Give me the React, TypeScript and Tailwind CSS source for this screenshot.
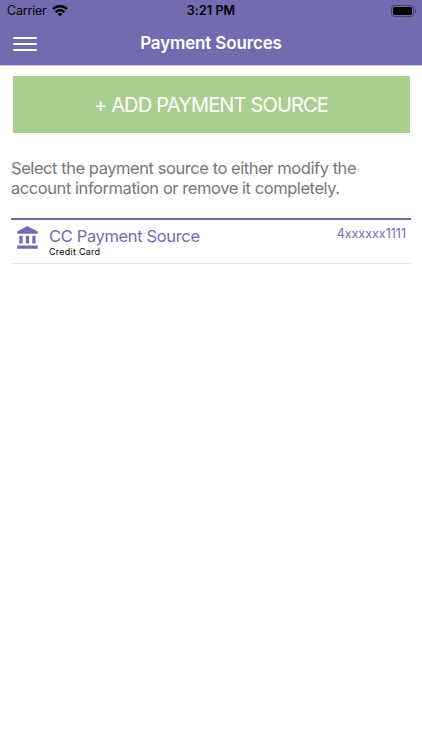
const sources = [{ name: "CC Payment Source", type: "Credit Card", number: "4xxxxxx1111" }];

function BankIcon() {
  return (
    <svg className="mt-[5px] ml-1 shrink-0" width="26" height="26" viewBox="0 0 24 24" fill="currentColor">
      <path d="M4 10v7h3v-7H4zm6 0v7h3v-7h-3zM2 22h19v-3H2v3zm14-12v7h3v-7h-3zm-4.500-9L2 6v2h19V6l-9.500-5z" />
    </svg>
  );
}

function StatusBar() {
  return (
    <div className="grid h-[22px] grid-cols-3 items-center text-black">
      <div className="flex items-center gap-[5px] pl-[7px]">
        <span className="text-[12.5px] tracking-[-0.2px]">Carrier</span>
        <svg width="16" height="12" viewBox="0 0 16 12" fill="currentColor">
          <path d="M8 11.600 5.600 9.100a3.400 3.400 0 0 1 4.800 0Z" />
          <path d="M2.800 6.200a7.400 7.400 0 0 1 10.400 0l-1.700 1.800a5 5 0 0 0-7 0Z" />
          <path d="M.100 3.300a11.300 11.300 0 0 1 15.800 0l-1.700 1.800a9 9 0 0 0-12.400 0Z" />
        </svg>
      </div>
      <div className="text-center text-[12.5px] font-semibold tracking-[0.1px]">3:21 PM</div>
      <div className="flex justify-end pr-[5px]">
        <svg width="26" height="12" viewBox="0 0 26 12">
          <rect x="0.5" y="0.5" width="22" height="11" rx="3" fill="none" stroke="#000" strokeOpacity="0.4" />
          <rect x="2" y="2" width="19" height="8" rx="1.7" fill="#000" />
          <path d="M24 4v4a2.200 2.200 0 0 0 0-4Z" fill="#000" fillOpacity="0.45" />
        </svg>
      </div>
    </div>
  );
}

export default function App() {
  return (
    <div className="h-[750px] w-[422px] overflow-hidden bg-white font-['Inter','Liberation_Sans',sans-serif]">
      <header className="h-[66px] border-b border-[#c9c6e0] bg-[#726bb0]">
        <StatusBar />
        <div className="grid h-[43px] grid-cols-[50px_1fr_50px] items-center text-white">
          <button className="ml-[13px] flex w-6 flex-col gap-1" aria-label="Menu">
            <span className="h-0.5 rounded-full bg-white" />
            <span className="h-0.5 rounded-full bg-white" />
            <span className="h-0.5 rounded-full bg-white" />
          </button>
          <h1 className="text-center text-[17px] font-semibold tracking-[-0.15px]">Payment Sources</h1>
        </div>
      </header>

      <main className="px-[11px] pt-[10px]">
        <button className="ml-[1.5px] flex h-[57px] w-[397px] items-center justify-center bg-[#a9cf90] text-[20px] tracking-[-0.82px] text-white">
          + ADD PAYMENT SOURCE
        </button>
        <p className="mt-[25px] text-[16.5px] leading-[20px] tracking-[-0.44px] text-[#777]">
          Select the payment source to either modify the
          <br />
          account information or remove it completely.
        </p>
        <ul className="mt-[20px] border-t-2 border-[#726bb0]">
          {sources.map((s) => (
            <li key={s.number} className="flex h-11 border-b border-[#e6e6e6] text-[#726bb0]">
              <BankIcon />
              <div className="ml-2 pt-[6px]">
                <div className="text-[16.5px] leading-[20px] tracking-[-0.35px]">{s.name}</div>
                <div className="text-[9px] leading-[12px] tracking-[0.25px] text-black">{s.type}</div>
              </div>
              <div className="mt-[6px] mr-[5px] ml-auto text-[12.5px] leading-[16px]">{s.number}</div>
            </li>
          ))}
        </ul>
      </main>
    </div>
  );
}
